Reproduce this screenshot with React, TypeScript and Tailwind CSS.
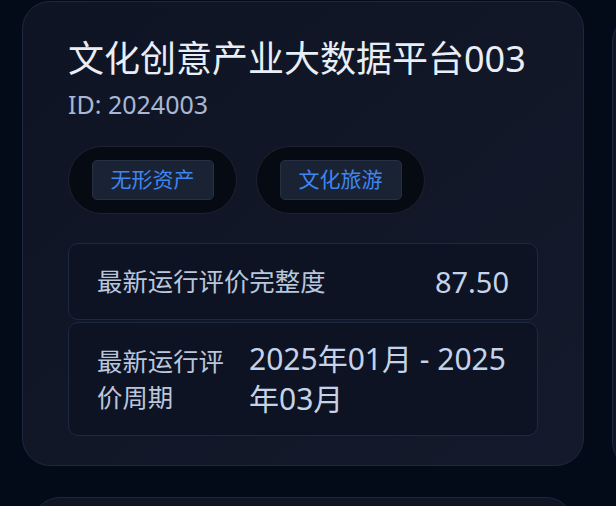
import React from "react";

const font = { fontFamily: '"Noto Sans", "Noto Sans CJK SC", sans-serif' };

function Tag({ text }: { text: string }) {
  return (
    <div className="flex h-[68px] w-[169px] items-center justify-center rounded-full border-[1.5px] border-[#1c2230] bg-[#060a13]">
      <div className="flex h-[40px] w-[122px] items-center justify-center rounded-[5px] border border-[#263042] bg-[#1a2333] text-[21px] text-[#3f86f0]">
        {text}
      </div>
    </div>
  );
}

export default function App() {
  return (
    <div
      className="flex h-[506px] w-[616px] gap-[28px] overflow-hidden bg-[#030a18] pl-[22px]"
      style={font}
    >
      <div className="flex w-[562px] shrink-0 flex-col gap-[31px] pt-[1px]">
        <div className="flex h-[465px] shrink-0 flex-col rounded-[28px] border border-[#1d2840] bg-gradient-to-br from-[#0e1423] to-[#141a2b] px-[45px] pt-[35px]">
          <div className="text-[36px] leading-[44px] text-[#e9eef6]">
            文化创意产业大数据平台003
          </div>
          <div className="mt-[7px] text-[25px] leading-[32px] text-[#a9b7d4]">
            ID: 2024003
          </div>
          <div className="mt-[26px] flex gap-[19px]">
            <Tag text="无形资产" />
            <Tag text="文化旅游" />
          </div>
          <div className="mt-[29px] flex flex-col gap-[2px]">
            <div className="flex h-[77px] items-center justify-between rounded-[10px] border border-[#1c2945] bg-[#0d1323] px-[28px]">
              <span className="text-[25.4px] text-[#b9c6dc]">最新运行评价完整度</span>
              <span className="text-[29px] text-[#c5d3ea]">87.50</span>
            </div>
            <div className="flex h-[114px] items-center gap-[12px] rounded-[10px] border border-[#1c2945] bg-[#0d1323] px-[28px]">
              <span className="w-[140px] shrink-0 text-[25.4px] leading-[36px] text-[#b9c6dc]">
                最新运行评价周期
              </span>
              <span className="text-[30px] leading-[40px] text-[#c5d3ea]">
                2025年01月 - 2025年03月
              </span>
            </div>
          </div>
        </div>
        <div className="mx-[10px] h-[80px] shrink-0 rounded-t-[28px] border border-[#1d2840] bg-[#0f1525]" />
      </div>
      <div className="mt-[14px] h-[456px] w-[560px] shrink-0 rounded-[28px] border border-[#1d2840] bg-[#0f1525]" />
    </div>
  );
}
